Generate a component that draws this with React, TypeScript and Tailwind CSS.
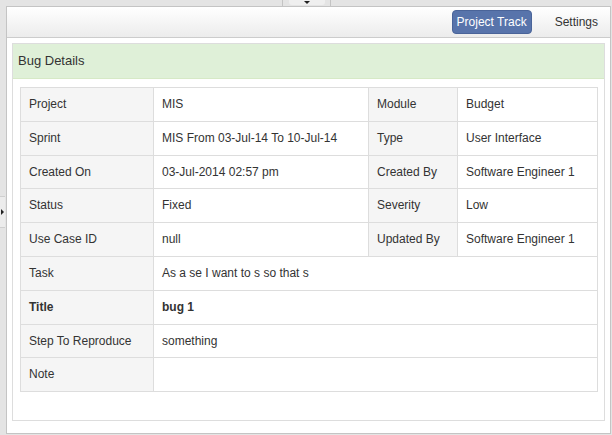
import React from 'react';

type Row = { label: string; value: string; label2?: string; value2?: string; bold?: boolean };

const ROWS: Row[] = [
  { label: 'Project', value: 'MIS', label2: 'Module', value2: 'Budget' },
  { label: 'Sprint', value: 'MIS From 03-Jul-14 To 10-Jul-14', label2: 'Type', value2: 'User Interface' },
  { label: 'Created On', value: '03-Jul-2014 02:57 pm', label2: 'Created By', value2: 'Software Engineer 1' },
  { label: 'Status', value: 'Fixed', label2: 'Severity', value2: 'Low' },
  { label: 'Use Case ID', value: 'null', label2: 'Updated By', value2: 'Software Engineer 1' },
  { label: 'Task', value: 'As a se I want to s so that s' },
  { label: 'Title', value: 'bug 1', bold: true },
  { label: 'Step To Reproduce', value: 'something' },
  { label: 'Note', value: '' },
];

const cell = 'border border-[#dddddd] px-[8px] py-[8px] leading-[16.8px] align-top whitespace-nowrap';
const labelCell = cell + ' bg-[#f5f5f5]';

const App: React.FC = () => {
  return (
    <div className="relative w-[612px] h-[435px] bg-[#e4e4e4] pl-[6px] pt-[6px] pr-[1px] pb-[1px] font-['Liberation_Sans',Arial,sans-serif] text-[12px] text-[#333333] overflow-hidden">
      {/* top splitter tab */}
      <div className="absolute left-[282px] top-0 w-[49px] h-[6px] border-l border-r border-[#c4c4c4] flex justify-center">
        <div className="w-[36px] h-[5px] bg-[#efefef] rounded-b-[3px] flex justify-center items-start pt-[1px]">
          <div className="w-0 h-0 border-l-[3px] border-r-[3px] border-t-[3px] border-l-transparent border-r-transparent border-t-[#222]" />
        </div>
      </div>
      {/* left splitter handle */}
      <div className="absolute left-0 top-[196px] w-[5px] h-[32px] bg-[#ececec] border-t border-b border-[#cfcfcf] flex items-center justify-center">
        <div className="w-0 h-0 border-t-[3px] border-b-[3px] border-l-[3px] border-t-transparent border-b-transparent border-l-[#222]" />
      </div>

      <div className="h-full bg-white border border-[#c4c4c4] flex flex-col">
        {/* header */}
        <div className="h-[31px] shrink-0 bg-gradient-to-b from-white to-[#ececec] border-b border-[#cccccc] flex items-center justify-end pr-[12px]">
          <div className="h-[24px] px-[4px] flex items-center rounded-[4px] bg-[#5874ab] border border-[#4a6499] text-white">
            Project Track
          </div>
          <div className="ml-[23px]">Settings</div>
        </div>

        {/* body */}
        <div className="px-[5px] pt-[5px]">
          <div className="border border-[#dddddd]">
            <div className="h-[35px] bg-[#dff0d8] border-b border-[#d6e9c6] pl-[5px] flex items-center text-[13px]">
              Bug Details
            </div>
            <div className="px-[7px] pt-[8px] pb-[8px]">
              <table className="w-[577px] table-fixed border-collapse mb-[20px]">
                <colgroup>
                  <col className="w-[133px]" />
                  <col className="w-[215px]" />
                  <col className="w-[89px]" />
                  <col className="w-[140px]" />
                </colgroup>
                <tbody>
                  {ROWS.map((r) => (
                    <tr key={r.label} className={r.bold ? 'font-bold' : ''}>
                      <td className={labelCell}>{r.label}</td>
                      {r.label2 ? (
                        <>
                          <td className={cell}>{r.value}</td>
                          <td className={labelCell}>{r.label2}</td>
                          <td className={cell}>{r.value2}</td>
                        </>
                      ) : (
                        <td className={cell} colSpan={3}>
                          {r.value || '\u00a0'}
                        </td>
                      )}
                    </tr>
                  ))}
                </tbody>
              </table>
            </div>
          </div>
        </div>
      </div>
    </div>
  );
};

export default App;
